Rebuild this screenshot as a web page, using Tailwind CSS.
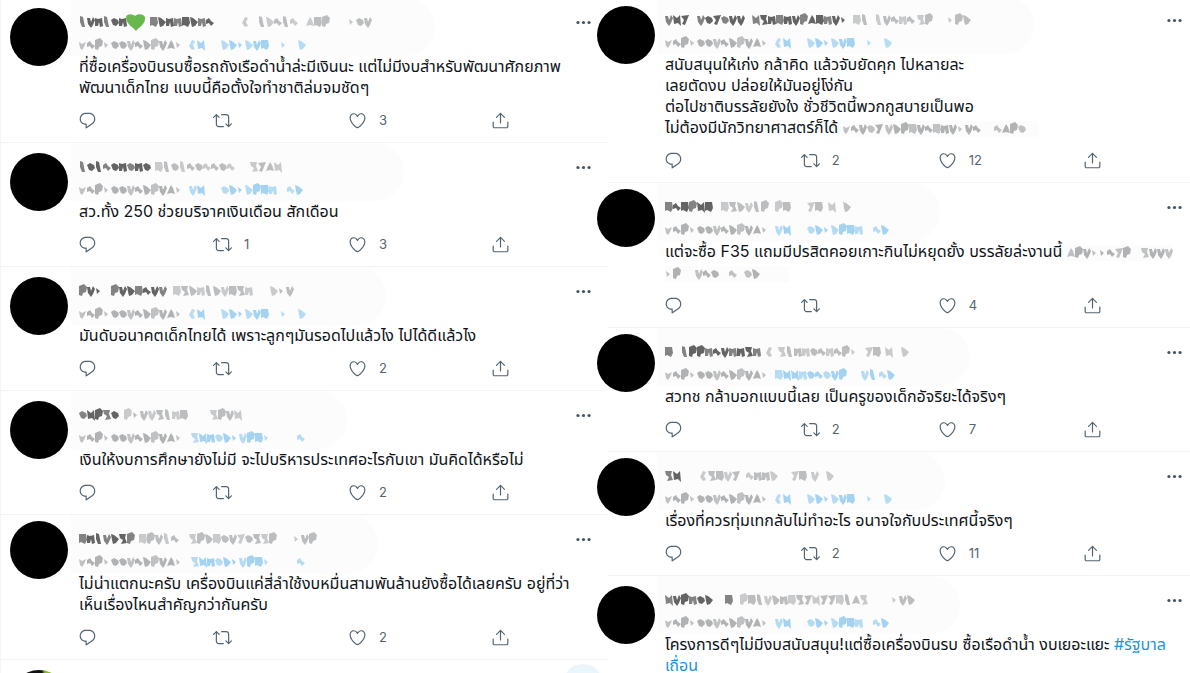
<!DOCTYPE html>
<html lang="th">
<head>
    <meta charset="UTF-8">
    <meta name="viewport" content="width=device-width, initial-scale=1.0">
    <title>Replies</title>
    <script src="https://cdn.jsdelivr.net/npm/@tailwindcss/browser@4"></script>
</head>
<body class="bg-white text-[#0f1419] font-['Inter','Noto_Sans_Thai','Noto_Sans',sans-serif]">
    <!-- Icon sprite -->
    <svg class="hidden">
        <symbol id="reply" viewBox="0 0 24 24"><path d="M14.046 2.242l-4.148-.01h-.002c-4.374 0-7.8 3.427-7.8 7.802 0 4.098 3.186 7.206 7.465 7.37v3.828c0 .108.044.286.12.403.142.225.384.347.632.347.138 0 .277-.038.402-.118.264-.168 6.473-4.14 8.088-5.506 1.902-1.61 3.04-3.97 3.043-6.312v-.017c-.006-4.367-3.43-7.787-7.8-7.788zm3.787 12.972c-1.134.96-4.862 3.405-6.772 4.643V16.67c0-.414-.335-.75-.75-.75h-.396c-3.66 0-6.318-2.476-6.318-5.886 0-3.534 2.768-6.302 6.3-6.302l4.147.01h.002c3.532 0 6.3 2.766 6.302 6.296-.003 1.91-.942 3.844-2.514 5.176z"/></symbol>
        <symbol id="retweet" viewBox="0 0 24 24"><path d="M23.77 15.67c-.292-.293-.767-.293-1.06 0l-2.22 2.22V7.65c0-2.068-1.683-3.75-3.75-3.75h-5.85c-.414 0-.75.336-.75.75s.336.75.75.75h5.85c1.24 0 2.25 1.01 2.25 2.25v10.24l-2.22-2.22c-.293-.293-.768-.293-1.06 0s-.294.768 0 1.06l3.5 3.5c.145.147.337.22.53.22s.383-.072.53-.22l3.5-3.5c.294-.292.294-.767 0-1.06zm-10.66 3.28H7.26c-1.24 0-2.25-1.01-2.25-2.25V6.46l2.22 2.22c.148.147.34.22.532.22s.384-.073.53-.22c.293-.293.293-.768 0-1.06l-3.5-3.5c-.293-.294-.768-.294-1.06 0l-3.5 3.5c-.294.292-.294.767 0 1.06s.767.293 1.06 0l2.22-2.22V16.7c0 2.068 1.683 3.75 3.75 3.75h5.85c.414 0 .75-.336.75-.75s-.337-.75-.75-.75z"/></symbol>
        <symbol id="like" viewBox="0 0 24 24"><path d="M12 21.638h-.014C9.403 21.59 1.95 14.856 1.95 8.478c0-3.064 2.525-5.754 5.403-5.754 2.29 0 3.83 1.58 4.646 2.73.814-1.148 2.354-2.73 4.645-2.73 2.88 0 5.404 2.69 5.404 5.755 0 6.376-7.454 13.11-10.037 13.157H12zM7.354 4.225c-2.08 0-3.903 1.988-3.903 4.255 0 5.74 7.034 11.596 8.55 11.658 1.518-.062 8.55-5.917 8.55-11.658 0-2.267-1.823-4.255-3.903-4.255-2.528 0-3.94 2.936-3.952 2.965-.23.562-1.156.562-1.387 0-.014-.03-1.425-2.965-3.954-2.965z"/></symbol>
        <symbol id="share" viewBox="0 0 24 24"><path d="M17.53 7.47l-5-5c-.293-.293-.768-.293-1.06 0l-5 5c-.294.293-.294.768 0 1.06s.767.294 1.06 0l3.72-3.72V15c0 .414.336.75.75.75s.75-.336.75-.75V4.81l3.72 3.72c.146.147.338.22.53.22s.384-.072.53-.22c.293-.293.293-.767 0-1.06z"/><path d="M19.708 21.944H4.292C3.028 21.944 2 20.916 2 19.652V14c0-.414.336-.75.75-.75s.75.336.75.75v5.652c0 .437.355.792.792.792h15.416c.437 0 .792-.355.792-.792V14c0-.414.336-.75.75-.75s.75.336.75.75v5.652c0 1.264-1.028 2.292-2.292 2.292z"/></symbol>
        <symbol id="more" viewBox="0 0 24 24"><circle cx="5" cy="12" r="2"/><circle cx="12" cy="12" r="2"/><circle cx="19" cy="12" r="2"/></symbol>
    </svg>

    <main class="grid grid-cols-[51fr_49fr] h-screen overflow-hidden">
        <section id="left" class="min-w-0 -mt-0.5 border-l border-[#f3f5f6]"></section>
        <section id="right" class="min-w-0 -mt-1"></section>
    </main>

    <script>
        // Redacted words are strings of small blobs, one letter per blob
        const blobs = {
            d: 'M0-5L3-4L8 0L5 4L2 5L1 1z', q: 'M0-3L3-1L7-3L5 2L3 5L1 3z', l: 'M1-6L4-5L5 0L6 5L3 5L1 0z', n: 'M0-4L3-3L7-4L8 4L5 5L4 0L3 4L0 4z',
            b: 'M0-5L7-5L8 1L6 5L2 3L0 4z', t: 'M0 4L2-1L4-5L6-2L8 4L4 3z', v: 'M0-4L3-4L4 0L6-5L8-2L6 3L4 6L1 2z', s: 'M0-2L3-4L5-1L8 1L5 4L3 1L0 2z',
            p: 'M0-5L5-7L8-4L7 1L4 2L3 5L0 4z', c: 'M3-5L6-4L4 0L6 4L3 5L0 1z', o: 'M0-2L3-4L7-2L8 1L5 4L2 3z',
            z: 'M0-5L7-5L6-1L8 4L2 5L4 1L1-1z', r: 'M0-4L8-5L6 0L4 5L1 4L3 0z', '.': 'M1-3L5 0L2 3z', N: 'M0-5L4-2L7-5L8 6L5 3L1 4z', ' ': ''
        };
        const tones = { k: '#646464', g: '#bbbdbf', c: '#b0b2b4', b: '#a3d3f0' };

        function smudge(words, y) {
            return words.map(([x, letters, tone]) => [...letters].map((ch, i) =>
                `<path transform="translate(${x + i * 8} ${y})" fill="${tones[tone]}" opacity="${i % 3 ? 1 : .8}" d="${blobs[ch]}"/>`
            ).join('')).join('');
        }

        function inlineSmudge(width, words) {
            return `<svg class="inline-block h-4 align-middle bg-[#fcfcfc]" style="width:${width}px">${smudge(words, 8)}</svg>`;
        }

        const context = [[0, 'qsp.oovsdpvt.', 'c']];
        const ctxA = [...context, [110, 'cN', 'b'], [142, 'dd.dvb', 'b'], [201, '.', 'b'], [219, 'd', 'b']];
        const ctxB = [...context, [110, 'vN', 'b'], [142, 'od.dpbn', 'b'], [208, 'sd', 'b']];
        const ctxC = [...context, [112, 'zNnod.vpb.', 'b'], [218, 's', 'b']];

        const left = [
            { end: 356, avatar: 'mt-2.5', heart: true, name: [[0, 'lvnlon', 'k'], [71, 'bdnnbdns', 'k'], [163, 'c ldsls', 'g'], [227, 'tbp', 'g'], [269, '.ov', 'g']], ctx: ctxA,
              text: 'ที่ซื้อเครื่องบินรบซื้อรถถังเรือดำน้ำล่ะมีเงินนะ แต่ไม่มีงบสำหรับพัฒนาศักยภาพ<br>พัฒนาเด็กไทย แบบนี้คือตั้งใจทำชาติล่มจมชัดๆ', likes: 3 },
            { end: 325, avatar: 'mt-2.5', name: [[0, 'lolsonono', 'k'], [76, 'blolsossos', 'g'], [171, 'zrtN', 'g']], ctx: ctxB,
              text: 'สว.ทั้ง 250 ช่วยบริจาคเงินเดือน สักเดือน', retweets: 1, likes: 3 },
            { end: 307, avatar: 'mt-2.5', name: [[0, 'pv.', 'k'], [32, 'pvdbsvv', 'k'], [94, 'bzdnldvbzn', 'g'], [191, 'd.v', 'g']], ctx: ctxA,
              text: 'มันดับอนาคตเด็กไทยได้ เพราะลูกๆมันรอดไปแล้วไง ไปได้ดีแล้วไง', likes: 2 },
            { end: 268, avatar: 'mt-2.5', name: [[0, 'oNpzo', 'k'], [45, 'p.vvzlnb', 'g'], [131, 'zpvN', 'g']], ctx: ctxC,
              text: 'เงินให้งบการศึกษายังไม่มี จะไปบริหารประเทศอะไรกับเขา มันคิดได้หรือไม่', likes: 2 },
            { end: 299, avatar: 'mt-1.5', name: [[0, 'bnlvdzp', 'k'], [60, 'bpvls', 'g'], [110, 'zpdbovrozzp', 'g'], [214, '.vp', 'g']], ctx: ctxC,
              text: 'ไม่น่าแตกนะครับ เครื่องบินแค่สี่ลำใช้งบหมื่นสามพันล้านยังซื้อได้เลยครับ อยู่ที่ว่า<br>เห็นเรื่องไหนสำคัญกว่ากันครับ', likes: 2 }
        ];

        const right = [
            { end: 369, avatar: 'mt-2.5', name: [[0, 'vNr', 'k'], [32, 'vorovv', 'k'], [87, 'Nznbnvptbnv.', 'k'], [188, 'bl', 'g'], [210, 'lvsns', 'g'], [252, 'zp', 'g'], [282, '.pd', 'g']], ctx: ctxA,
              text: 'สนับสนุนให้เก่ง กล้าคิด แล้วจับยัดคุก ไปหลายละ<br>เลยตัดงบ ปล่อยให้มันอยู่โง่กัน<br>ต่อไปชาติบรรลัยยังใง ชั่วชีวิตนี้พวกกูสบายเป็นพอ<br>ไม่ต้องมีนักวิทยาศาสตร์ก็ได้ '
                  + inlineSmudge(196, [[0, 'qsvor', 'c'], [42, 'vdpbvsbnv.vs', 'c'], [151, 'stpo', 'c']]), retweets: 2, likes: 12 },
            { end: 275, avatar: 'mt-1.5', name: [[0, 'bsbpNb', 'k'], [56, 'bzdvlp', 'g'], [110, 'pb', 'g'], [142, 'rb', 'g'], [163, 'N', 'g'], [178, 'd', 'c']], ctx: ctxB,
              text: 'แต่จะซื้อ F35 แถมมีปรสิตคอยเกาะกินไม่หยุดยั้ง บรรลัยล่ะงานนี้ '
                  + inlineSmudge(106, [[0, 'tpv..srp', 'c'], [74, 'zvvv', 'c']]) + '<br>'
                  + inlineSmudge(124, [[0, '.p', 'c'], [30, 'vso', 'c'], [64, 's', 'c'], [79, 'od', 'c']]), likes: 4 },
            { end: 305, avatar: 'mt-1.5', name: [[0, 'b', 'k'], [16, 'lppnsvnnzn', 'k'], [101, 'c', 'g'], [113, 'zlnnosnsp.', 'g'], [200, 'rb', 'g'], [220, 'N', 'g'], [236, 'd', 'g']], ctx: [...context, [110, 'bNNnosovp'.slice(0, 9), 'b'], [196, 'vl', 'b'], [214, 'sd', 'b']],
              text: 'สวทช กล้าบอกแบบนี้เลย เป็นครูของเด็กอัจริยะได้จริงๆ', retweets: 2, likes: 7 },
            { end: 280, avatar: 'mt-1.5', name: [[0, 'zN', 'k'], [35, 'czbvr', 'g'], [81, 'snnd', 'g'], [126, 'rb', 'g'], [146, 'v', 'g'], [161, 'd', 'g']], ctx: ctxA,
              text: 'เรื่องที่ควรทุ่มเทกลับไม่ทำอะไร อนาจใจกับประเทศนี้จริงๆ', retweets: 2, likes: 11 },
            { end: 295, avatar: 'mt-2.5', name: [[0, 'Nvpnod', 'k'], [60, 'b', 'k'], [75, 'pblvdnbzrNrrbltz', 'g'], [226, '.vd', 'g']], ctx: ctxB,
              text: 'โครงการดีๆไม่มีงบสนับสนุน!แต่ซื้อเครื่องบินรบ ซื้อเรือดำน้ำ งบเยอะแยะ <a href="#" class="text-[#1b95e0]">#รัฐบาล<br>เถื่อน</a>' }
        ];

        function action(icon, label, count) {
            return `<button type="button" aria-label="${label}" class="flex items-center gap-3 whitespace-nowrap">
                <svg class="size-[19px] shrink-0 fill-current"><use href="#${icon}"/></svg>${count ? `<span>${count}</span>` : ''}
            </button>`;
        }

        function tweet(t, side) {
            return `<article class="flex border-b border-[#f1f3f4] pb-3 ${side === 'left' ? 'pl-[9px] pr-3.5 gap-[11px]' : 'pr-1.5 gap-2.5'}">
                <div class="size-[58px] shrink-0 rounded-full bg-black ${t.avatar} ${side === 'left' ? '' : '-ml-2.5'}"></div>
                <div class="flex-1 min-w-0">
                    <div class="flex items-start justify-between">
                        <div class="-ml-2 pl-2 h-[58px] rounded-r-full bg-[#fcfcfc]" style="width:${t.end + 8}px">
                            <svg class="w-full h-full">
                                ${smudge(t.name, 24)}${smudge(t.ctx, 47)}
                                ${t.heart ? '<path fill="#69b84f" d="M47 19C48 15 54 16 56 18C59 15 65 16 66 19C67 26 60 29 57 33C54 29 47 26 47 19z"/>' : ''}
                            </svg>
                        </div>
                        <button type="button" aria-label="More" class="mt-[15px] text-[#43535f]"><svg class="size-[19px] fill-current"><use href="#more"/></svg></button>
                    </div>
                    <p class="text-base leading-[21px] whitespace-nowrap">${t.text}</p>
                    <div class="mt-[13px] -ml-px h-[19px] ${side === 'left' ? 'max-w-[432px]' : 'max-w-[438px]'} grid grid-cols-[135fr_135fr_143fr_19fr] text-[13px] leading-[19px] text-[#536471]">
                        ${action('reply', 'Reply')}${action('retweet', 'Retweet', t.retweets)}${action('like', 'Like', t.likes)}${action('share', 'Share')}
                    </div>
                </div>
            </article>`;
        }

        // Start of the next reply, cut off by the bottom of the window
        const nextReply = `<article class="flex justify-between items-start pl-[9px] pr-1">
            <div class="mt-2.5 size-[58px] rounded-full bg-[linear-gradient(90deg,#111_55%,#8cb82b_60%)]"></div>
            <button type="button" aria-label="More" class="mt-1 size-10 rounded-full bg-[#eaf5fc]"></button>
        </article>`;

        document.getElementById('left').innerHTML = left.map(t => tweet(t, 'left')).join('') + nextReply;
        document.getElementById('right').innerHTML = right.map(t => tweet(t, 'right')).join('');
    </script>
</body>
</html>
